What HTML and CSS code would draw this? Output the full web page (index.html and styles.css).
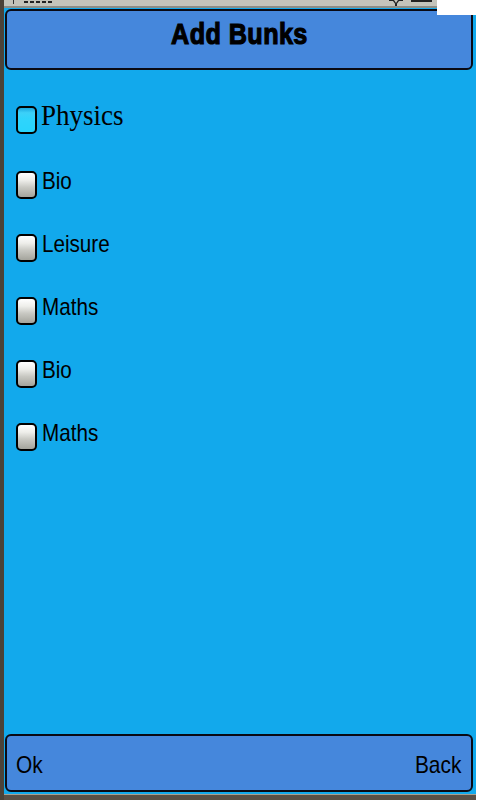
FILE: index.html
```html
<!DOCTYPE html>
<html>
<head>
<meta charset="utf-8">
<link rel="stylesheet" href="styles.css">
</head>
<body>
<div class="screen">
  <div class="status">
    <span class="sig-bar"></span>
    <span class="dots"><i></i><i></i><i></i><i></i><i></i></span>
    <span class="spacer"></span>
    <svg class="st-icon" width="14" height="6" viewBox="0 0 14 6"><path d="M0 0h5l2 3 2-3h5v1h-4l-3 4-3-4h-4z" fill="#222"/><rect x="6" y="4" width="2" height="2" fill="#222"/></svg>
    <span class="dash"></span>
  </div>
  <div class="corner-white"></div>
  <header class="title-bar"><span class="title">Add Bunks</span></header>
  <div class="list">
    <div class="row first"><span class="box active"></span><span class="label serif">Physics</span></div>
    <div class="row"><span class="box"></span><span class="label">Bio</span></div>
    <div class="row"><span class="box"></span><span class="label">Leisure</span></div>
    <div class="row"><span class="box"></span><span class="label">Maths</span></div>
    <div class="row"><span class="box"></span><span class="label">Bio</span></div>
    <div class="row"><span class="box"></span><span class="label">Maths</span></div>
  </div>
  <footer class="soft-bar">
    <span class="soft">Ok</span>
    <span class="soft">Back</span>
  </footer>
  <div class="bottom-strip"></div>
</div>
</body>
</html>
```
FILE: styles.css
```css
html, body {
  margin: 0;
  padding: 0;
  background: #ffffff;
}
.screen {
  position: relative;
  width: 472px;
  height: 800px;
  border-left: 4px solid #4b4238;
  background: #12a9ec;
  display: flex;
  flex-direction: column;
  font-family: "Liberation Sans", Arial, sans-serif;
  color: #000;
}
.status {
  height: 8px;
  box-sizing: border-box;
  background: #c4c4bb;
  border-bottom: 2px solid #8e8e86;
  display: flex;
  align-items: flex-start;
  padding-left: 9px;
}
.sig-bar {
  width: 1px;
  height: 4px;
  background: #333;
}
.dots {
  display: flex;
  gap: 2px;
  margin-left: 10px;
  margin-top: 1px;
}
.dots i {
  display: block;
  width: 4px;
  height: 2px;
  background: #222;
}
.spacer { flex: 1; }
.st-icon {
  margin-right: 8px;
}
.dash {
  width: 21px;
  height: 2px;
  background: #222;
  margin-right: 44px;
}
.corner-white {
  position: absolute;
  top: 0;
  right: -4px;
  width: 43px;
  height: 15px;
  background: #fff;
}
.title-bar {
  margin: 1px 3px 0 1px;
  height: 61px;
  box-sizing: border-box;
  background: #4587dc;
  border: 2px solid #0a0a14;
  border-radius: 6px;
  text-align: center;
  padding-top: 8px;
}
.title {
  display: inline-block;
  font-weight: bold;
  font-size: 30px;
  line-height: 30px;
  transform: scaleX(0.84);
  letter-spacing: 0.5px;
  -webkit-text-stroke: 1.2px #000;
}
.list {
  display: flex;
  flex-direction: column;
  gap: 35px;
  padding-top: 36px;
  padding-left: 12px;
}
.row {
  display: flex;
  align-items: flex-start;
  height: 28px;
}
.row.first {
  margin-bottom: 2px;
}
.box {
  width: 21px;
  height: 28px;
  box-sizing: border-box;
  border: 2px solid #000;
  border-radius: 5px;
  background: linear-gradient(#ffffff 0%, #eeeeea 30%, #c8c8c2 60%, #a4a49c 100%);
  flex: none;
}
.box.active {
  background: linear-gradient(#1aa8e0 0%, #3dd0f8 20%, #2fd4fc 45%, #28d4fc 100%);
}
.label {
  display: inline-block;
  font-size: 24px;
  line-height: 24px;
  margin-top: -2px;
  margin-left: 5px;
  transform: scaleX(0.86);
  transform-origin: left center;
}
.label.serif {
  font-family: "Liberation Serif", "Times New Roman", serif;
  font-size: 30px;
  line-height: 30px;
  margin-top: -6px;
  margin-left: 4px;
  transform: scaleX(0.9);
}
.soft-bar {
  margin: auto 3px 0 1px;
  height: 58px;
  box-sizing: border-box;
  background: #4587dc;
  border: 2px solid #0a0a14;
  border-radius: 6px;
  display: flex;
  justify-content: space-between;
  align-items: flex-start;
  padding: 17px 10px 0 9px;
}
.soft {
  display: inline-block;
  font-size: 24px;
  line-height: 24px;
  transform: scaleX(0.87);
}
.soft:first-child { transform-origin: left center; }
.soft:last-child { transform-origin: right center; }
.bottom-strip {
  margin-top: 2px;
  height: 6px;
  box-sizing: border-box;
  border-top: 1px solid #a8a090;
  background: #5a5046;
}
```
